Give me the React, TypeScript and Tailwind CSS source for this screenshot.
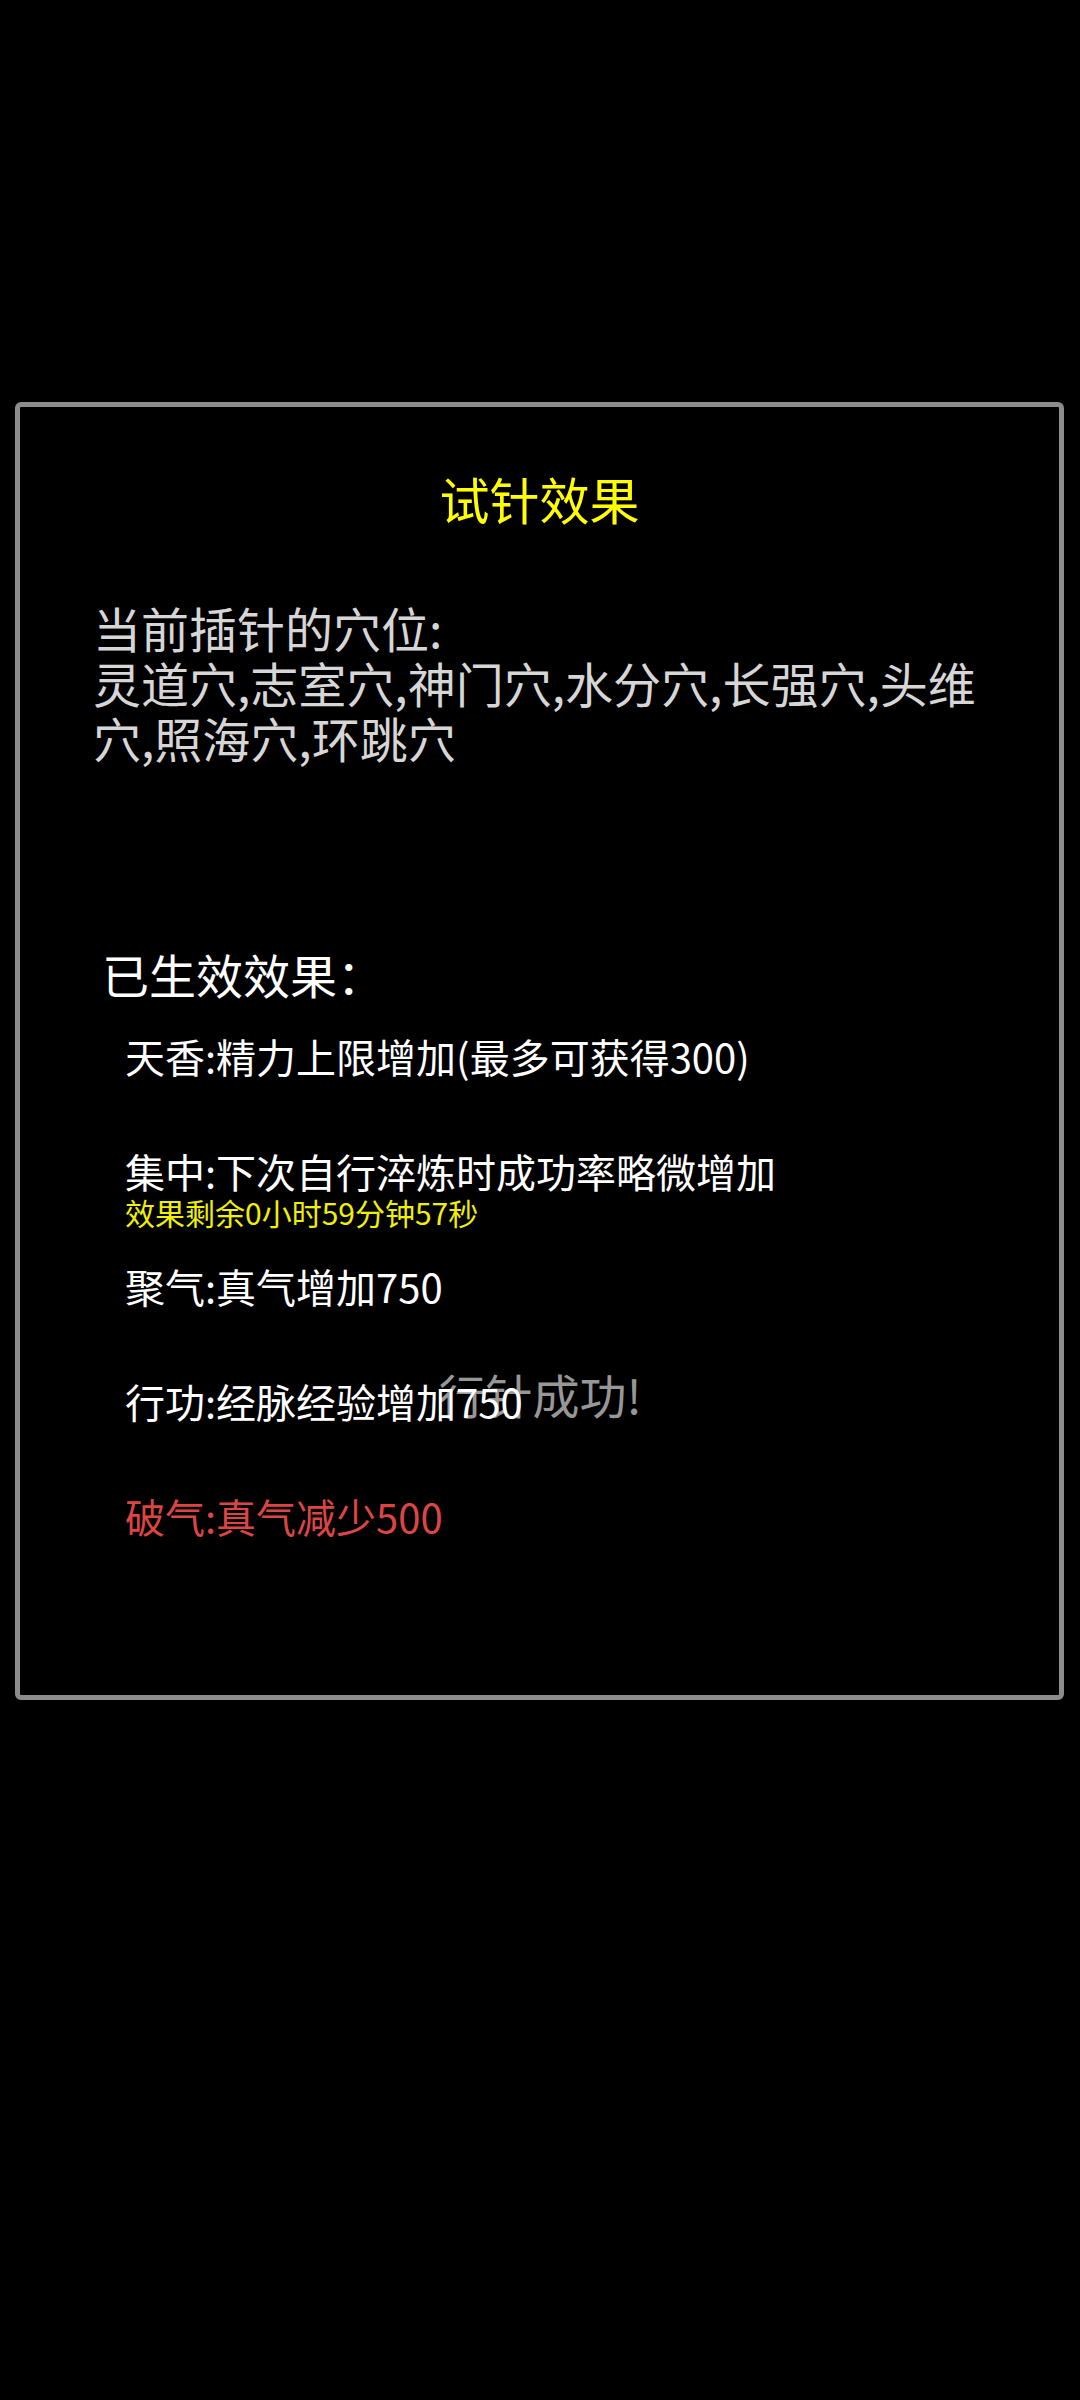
const effects = [
  { text: '天香:精力上限增加(最多可获得300)', color: 'text-white' },
  { text: '集中:下次自行淬炼时成功率略微增加', color: 'text-white', sub: '效果剩余0小时59分钟57秒' },
  { text: '聚气:真气增加750', color: 'text-white' },
  { text: '行功:经脉经验增加750', color: 'text-white' },
  { text: '破气:真气减少500', color: 'text-[#dc4545]' },
];

export default function App() {
  return (
    <div className="relative w-[1080px] h-[2400px] bg-black pt-[402px] font-['Noto_Sans_CJK_SC','Noto_Sans',sans-serif]">
      <div className="ml-[15px] w-[1049px] h-[1298px] border-[5px] border-[#8c8c8c] rounded-[6px] bg-black flex flex-col">
        <h1 className="mt-[61px] text-center text-[50px] leading-[60px] text-[#ffff00]">试针效果</h1>

        <p className="mt-[72px] px-[73px] text-[48px] leading-[55px] text-[#d6d6d6]">
          当前插针的穴位:
          <br />
          灵道穴,志室穴,神门穴,水分穴,长强穴,头维穴,照海穴,环跳穴
        </p>

        <div className="mt-[181px] pl-[82px] text-[47px] leading-[56px] text-white">已生效效果：</div>

        <ul className="mt-[30px] pl-[105px] flex flex-col">
          {effects.map((e) => (
            <li key={e.text} className="h-[115px]">
              <div className={`text-[40px] leading-[48px] ${e.color}`}>{e.text}</div>
              {e.sub && <div className="-mt-[1px] text-[30px] leading-[36px] text-[#f0f000]">{e.sub}</div>}
            </li>
          ))}
        </ul>
      </div>

      {/* toast */}
      <div className="absolute left-0 right-0 top-[1366px] text-center text-[47px] leading-[56px] text-white/60 pointer-events-none">
        行针成功!
      </div>
    </div>
  );
}
